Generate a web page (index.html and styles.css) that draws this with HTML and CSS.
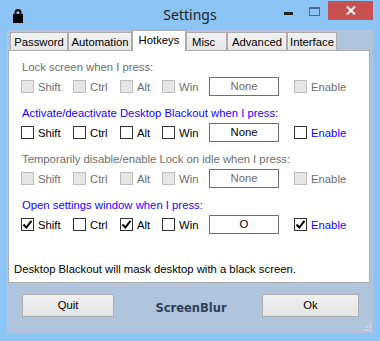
FILE: index.html
```html
<!DOCTYPE html>
<html>
<head>
<meta charset="utf-8">
<title>Settings</title>
<link rel="stylesheet" href="styles.css">
</head>
<body>

<div id="window">
    <div class="titlebar">
        <div class="title_left">
            <svg class="lock" width="10" height="15" viewBox="0 0 10 15">
                <path d="M2.5 7 V4.5 A2.5 2.5 0 0 1 7.5 4.5 V7" fill="none" stroke="#000" stroke-width="2"/>
                <rect x="0" y="6" width="10" height="9" fill="#000"/>
            </svg>
        </div>
        <div class="title_text">Settings</div>
        <div class="title_buttons">
            <div class="tb_min"><span></span></div>
            <div class="tb_max"><span></span></div>
            <div class="tb_close">
                <svg width="10" height="9" viewBox="0 0 10 9">
                    <path d="M1 0.5 L9 8.5 M9 0.5 L1 8.5" stroke="#fff" stroke-width="2"/>
                </svg>
            </div>
        </div>
    </div>

    <div id="client">
        <div class="tabs">
            <div class="tab tab_password">Password</div>
            <div class="tab tab_automation">Automation</div>
            <div class="tab tab_hotkeys selected">Hotkeys</div>
            <div class="tab tab_misc">Misc</div>
            <div class="tab tab_advanced">Advanced</div>
            <div class="tab tab_interface">Interface</div>
        </div>

        <div class="panel">
            <div class="group disabled">
                <div class="group_label">Lock screen when I press:</div>
                <div class="keys">
                    <div class="check"><span class="box"></span>Shift</div>
                    <div class="check"><span class="box"></span>Ctrl</div>
                    <div class="check"><span class="box"></span>Alt</div>
                    <div class="check"><span class="box"></span>Win</div>
                    <div class="keybox">None</div>
                    <div class="check"><span class="box"></span>Enable</div>
                </div>
            </div>

            <div class="group active">
                <div class="group_label">Activate/deactivate Desktop Blackout when I press:</div>
                <div class="keys">
                    <div class="check"><span class="box"></span>Shift</div>
                    <div class="check"><span class="box"></span>Ctrl</div>
                    <div class="check"><span class="box"></span>Alt</div>
                    <div class="check"><span class="box"></span>Win</div>
                    <div class="keybox">None</div>
                    <div class="check enable"><span class="box"></span>Enable</div>
                </div>
            </div>

            <div class="group disabled">
                <div class="group_label">Temporarily disable/enable Lock on idle when I press:</div>
                <div class="keys">
                    <div class="check"><span class="box"></span>Shift</div>
                    <div class="check"><span class="box"></span>Ctrl</div>
                    <div class="check"><span class="box"></span>Alt</div>
                    <div class="check"><span class="box"></span>Win</div>
                    <div class="keybox">None</div>
                    <div class="check"><span class="box"></span>Enable</div>
                </div>
            </div>

            <div class="group active">
                <div class="group_label">Open settings window when I press:</div>
                <div class="keys">
                    <div class="check"><span class="box checked"><svg width="11" height="11" viewBox="0 0 11 11"><path d="M1.5 5.5 L4.3 8.5 L9.5 1.8" fill="none" stroke="#000" stroke-width="2"/></svg></span>Shift</div>
                    <div class="check"><span class="box"></span>Ctrl</div>
                    <div class="check"><span class="box checked"><svg width="11" height="11" viewBox="0 0 11 11"><path d="M1.5 5.5 L4.3 8.5 L9.5 1.8" fill="none" stroke="#000" stroke-width="2"/></svg></span>Alt</div>
                    <div class="check"><span class="box"></span>Win</div>
                    <div class="keybox">O</div>
                    <div class="check enable"><span class="box checked"><svg width="11" height="11" viewBox="0 0 11 11"><path d="M1.5 5.5 L4.3 8.5 L9.5 1.8" fill="none" stroke="#000" stroke-width="2"/></svg></span>Enable</div>
                </div>
            </div>

            <div class="note">Desktop Blackout will mask desktop with a black screen.</div>
        </div>

        <div class="bottom">
            <div class="button quit">Quit</div>
            <div class="brand">ScreenBlur</div>
            <div class="button ok">Ok</div>
        </div>

        <svg class="grip" width="8" height="8" viewBox="0 0 8 8">
            <rect x="6" y="0" width="2" height="2" fill="#c8d4e4"/>
            <rect x="3" y="3" width="2" height="2" fill="#c8d4e4"/>
            <rect x="6" y="3" width="2" height="2" fill="#c8d4e4"/>
            <rect x="0" y="6" width="2" height="2" fill="#c8d4e4"/>
            <rect x="3" y="6" width="2" height="2" fill="#c8d4e4"/>
            <rect x="6" y="6" width="2" height="2" fill="#c8d4e4"/>
        </svg>
    </div>
</div>

</body>
</html>
```

FILE: styles.css
```css
body {
    margin: 0;
    padding: 0;
    font: 11.3px/14px "Liberation Sans", Arial, sans-serif;
    color: #000;
    cursor: default;
}
#window {
    width: 380px;
    height: 341px;
    background: #8bc4f5;
    box-sizing: border-box;
    padding-bottom: 8px;
    display: flex;
    flex-direction: column;
}

/* title bar */
.titlebar {
    height: 30px;
    display: grid;
    grid-template-columns: 1fr auto 1fr;
}
.title_left {
    padding: 8px 0 0 13px;
}
.lock {
    display: block;
}
.title_text {
    font: 14px/30px "Noto Sans", "Open Sans", sans-serif;
    color: #222;
}
.title_buttons {
    display: flex;
    justify-content: flex-end;
    align-items: flex-start;
    padding-right: 7px;
}
.tb_min, .tb_max {
    height: 20px;
    display: flex;
    justify-content: center;
}
.tb_min {
    width: 26px;
}
.tb_min span {
    width: 9px;
    height: 3px;
    margin-top: 12px;
    background: #222;
}
.tb_max {
    width: 27px;
}
.tb_max span {
    width: 9px;
    height: 6px;
    margin-top: 7px;
    border: 1px solid #4d6a8a;
    border-top-width: 2px;
}
.tb_close {
    width: 45px;
    height: 19px;
    margin-top: 1px;
    background: #c75050;
    display: flex;
    justify-content: center;
    align-items: center;
}
.tb_close svg {
    display: block;
}

/* client area */
#client {
    position: relative;
    flex: 1;
    margin: 0 7px;
    background: #b0c4de;
    padding: 0 3px 0 1px;
    display: flex;
    flex-direction: column;
}
.tabs {
    display: flex;
    align-items: flex-end;
    height: 20px;
    padding-left: 2px;
    position: relative;
    z-index: 1;
}
.tab {
    box-sizing: border-box;
    height: 18px;
    border: 1px solid #acacac;
    border-bottom: none;
    background: linear-gradient(#f2f2f2, #e6e6e6);
    text-align: center;
    line-height: 18px;
}
.tab.selected {
    height: 21px;
    margin-bottom: -1px;
    background: #fff;
    line-height: 19px;
}
.tab_password { width: 58px; }
.tab_automation { width: 64px; }
.tab_hotkeys { width: 54px; }
.tab_misc { width: 41px; text-align: left; padding-left: 5px; }
.tab_advanced { width: 60px; }
.tab_interface { width: 50px; }

.panel {
    height: 233px;
    box-sizing: border-box;
    background: #fff;
    border: 1px solid #adadad;
    padding: 9px 0 0 0;
}
.group {
    margin-bottom: 11px;
}
.group_label {
    padding-left: 13px;
    height: 14px;
}
.disabled .group_label,
.disabled .check {
    color: #6d6d6d;
}
.active .group_label,
.check.enable {
    color: #1a00ff;
}
.keys {
    margin-top: 3px;
    padding-left: 12px;
    height: 18px;
    display: grid;
    grid-template-columns: 52px 47px 42px 47px 85px auto;
    align-items: center;
}
.check {
    display: flex;
    align-items: center;
    gap: 4px;
}
.box {
    box-sizing: border-box;
    width: 13px;
    height: 13px;
    border: 1px solid #333;
    background: #fff;
    display: flex;
    align-items: center;
    justify-content: center;
}
.box svg {
    display: block;
}
.disabled .box {
    border-color: #bcbcbc;
    background: #e6e6e6;
}
.keybox {
    box-sizing: border-box;
    width: 70px;
    height: 19px;
    border: 1px solid #6e6e6e;
    text-align: center;
    line-height: 17px;
}
.disabled .keybox {
    color: #6d6d6d;
}
.note {
    margin-top: 29px;
    padding-left: 5px;
}

/* bottom bar */
.bottom {
    flex: 1;
    display: flex;
    justify-content: space-between;
    align-items: flex-start;
    padding: 11px 11px 0 14px;
}
.button {
    box-sizing: border-box;
    height: 23px;
    border: 1px solid #acacac;
    background: linear-gradient(#f0f0f0, #e5e5e5);
    text-align: center;
    line-height: 21px;
}
.quit { width: 92px; }
.ok { width: 97px; }
.brand {
    font: bold 11.5px/14px "DejaVu Sans", Verdana, sans-serif;
    color: #2e3f5e;
    padding-top: 7px;
    margin-left: 6px;
}
.grip {
    position: absolute;
    right: 2px;
    bottom: 2px;
}
```
